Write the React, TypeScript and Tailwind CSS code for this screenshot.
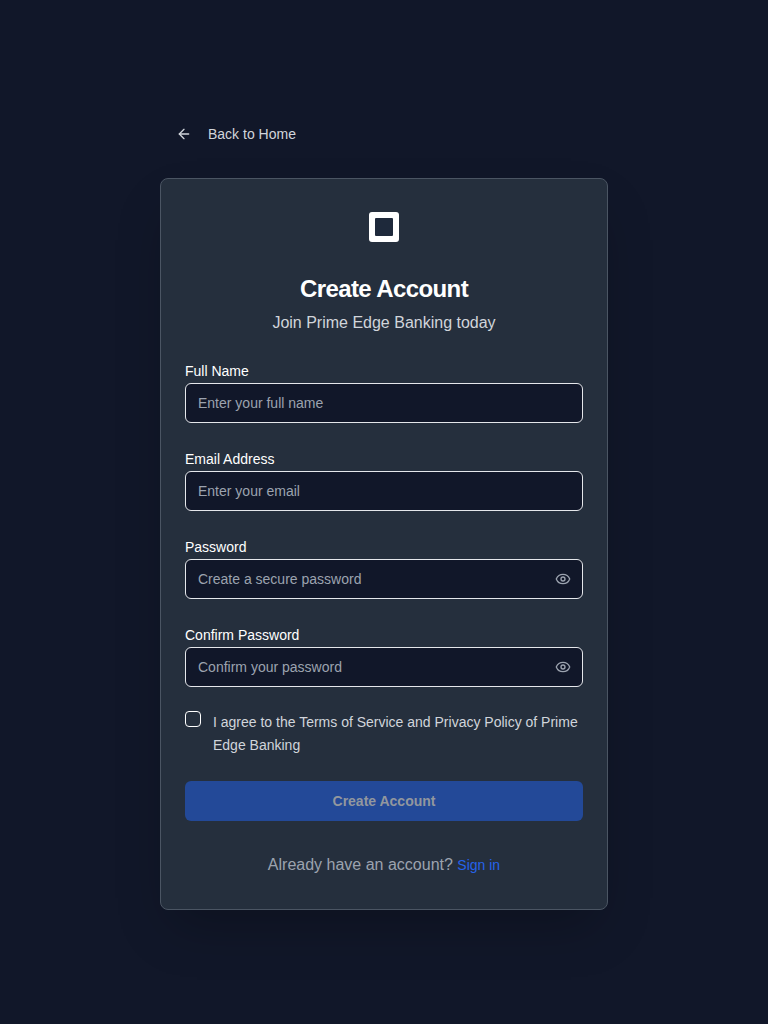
import React from "react";
import { ArrowLeft, Eye } from "lucide-react";

type FieldProps = { label: string; placeholder: string; type?: string; secret?: boolean };

function Field({ label, placeholder, type = "text", secret }: FieldProps) {
  return (
    <div className="h-16">
      <label className="block h-6 pt-[5px] text-sm leading-[14px] font-normal text-white">{label}</label>
      <div className="relative">
        <input
          type={type}
          placeholder={placeholder}
          className="block h-10 w-full rounded-md border border-[#e5e7eb] bg-[#111729] px-3 py-2 text-sm text-white placeholder:text-[#9ca3af]"
        />
        {secret && (
          <button type="button" className="absolute top-0 right-0 flex h-10 items-center px-3 text-[#9ca3af]">
            <Eye size={16} />
          </button>
        )}
      </div>
    </div>
  );
}

export default function App() {
  return (
    <div className="flex min-h-screen items-center justify-center bg-[#111729] p-4 font-['Liberation_Sans',Arial,sans-serif]">
      <div className="w-[448px]">
        <button type="button" className="mb-6 flex h-10 items-center gap-4 px-4 text-sm text-[#d1d5db]">
          <ArrowLeft size={16} />
          Back to Home
        </button>
        <div className="h-[732px] rounded-lg border border-[#4b5563] bg-[#252f3d] px-6 pt-8 shadow-2xl">
          <div className="flex justify-center">
            <div className="mt-px flex size-[30px] items-center justify-center rounded-[3px] bg-white">
              <div className="size-[18px] rounded-[1px] bg-[#1e293b]" />
            </div>
          </div>
          <h1 className="mt-[35px] text-center text-2xl leading-6 font-bold tracking-tight text-white">Create Account</h1>
          <p className="mt-2.5 text-center text-base text-[#d1d5db]">Join Prime Edge Banking today</p>
          <form className="mt-6 flex flex-col gap-6">
            <Field label="Full Name" placeholder="Enter your full name" />
            <Field label="Email Address" placeholder="Enter your email" />
            <Field label="Password" placeholder="Create a secure password" type="password" secret />
            <Field label="Confirm Password" placeholder="Confirm your password" type="password" secret />
            <div className="flex items-start gap-3">
              <button type="button" role="checkbox" aria-checked="false" className="size-4 shrink-0 rounded border border-white" />
              <span className="text-sm leading-[22.75px] text-[#d1d5db]">
                I agree to the Terms of Service and Privacy Policy of Prime Edge Banking
              </span>
            </div>
            <button type="button" className="h-10 rounded-md bg-[#234998] text-sm font-bold text-[#92979e]">Create Account</button>
          </form>
          <p className="mt-8 text-center text-base text-[#9ca3af]">
            Already have an account? <a className="text-sm text-[#2563eb]">Sign in</a>
          </p>
        </div>
      </div>
    </div>
  );
}
